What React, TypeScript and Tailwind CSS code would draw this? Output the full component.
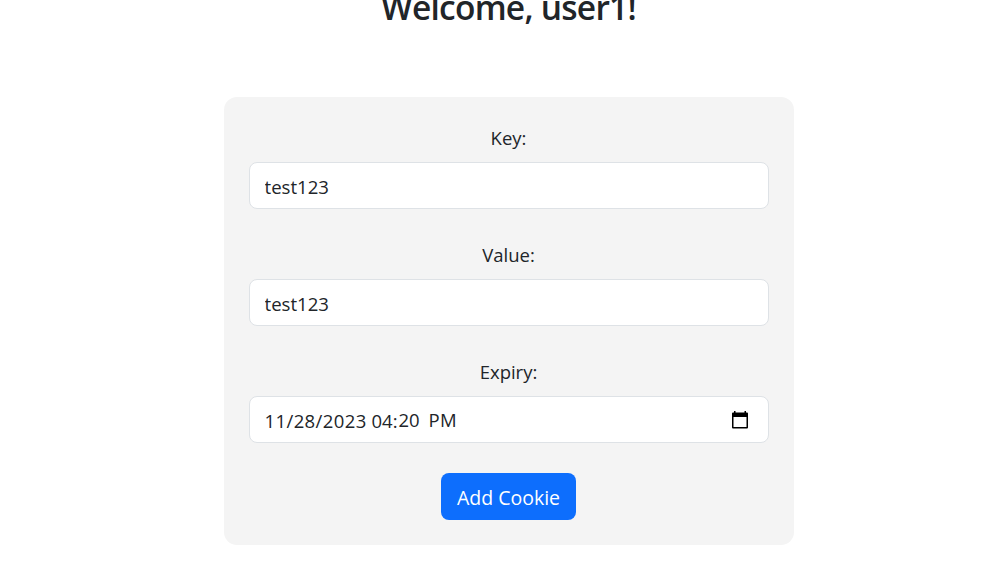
import React from "react";

const inputClass =
  "block h-[47px] w-full rounded-[8px] border border-[#dee2e6] bg-white px-[15px] pt-[2px] text-[18.6px] leading-none text-[#212529] outline-none";

function Field({ label, value }: { label: string; value: string }) {
  return (
    <div className="mb-[30px]">
      <label className="mb-[8px] block h-[32px] text-center leading-[32px]">{label}</label>
      <input className={inputClass} defaultValue={value} />
    </div>
  );
}

export default function App() {
  return (
    <div className="h-[575px] overflow-hidden bg-white pl-[30px] font-['Open_Sans','Noto_Sans',sans-serif] text-[18.5px] text-[#212529]">
      <h1 className="-mt-[15px] mb-[68px] h-[44px] text-center text-[33.5px] font-semibold leading-[44px] tracking-[-0.75px]">
        Welcome, user1!
      </h1>
      <form className="mx-auto h-[448px] w-[570px] rounded-[13px] bg-[#f4f4f4] px-[25px] pt-[25px]">
        <Field label="Key:" value="test123" />
        <Field label="Value:" value="test123" />
        <label className="mb-[8px] block h-[32px] text-center leading-[32px]">Expiry:</label>
        <div className="flex h-[47px] items-center justify-between rounded-[8px] border border-[#dee2e6] bg-white pl-[15px] pr-[19px]">
          <div className="flex">
            <span className="w-[107px] pt-[2px] tracking-[0.4px]">11/28/2023</span>
            <span className="w-[27px] pt-[2px]">04:</span>
            <span className="w-[30px] pt-[1px]">20</span>
            <span className="pt-[1px] tracking-[0.4px]">PM</span>
          </div>
          <svg className="h-[20px] w-[18px]" viewBox="0 0 18 20" fill="black">
            <path
              fillRule="evenodd"
              d="M16 2.500h-1V1h-1.500v1.500h-9V1H3v1.500H2Q1 2.500 1 3.500v14q0 1 1 1h14q1 0 1-1v-14q0-1-1-1ZM2.500 7h13v10h-13Z"
            />
          </svg>
        </div>
        <button type="button" className="mx-auto mt-[30px] block h-[47px] w-[135px] rounded-[8px] bg-[#0d6efd] pt-[2px] text-[19.5px] text-white">
          Add Cookie
        </button>
      </form>
    </div>
  );
}
